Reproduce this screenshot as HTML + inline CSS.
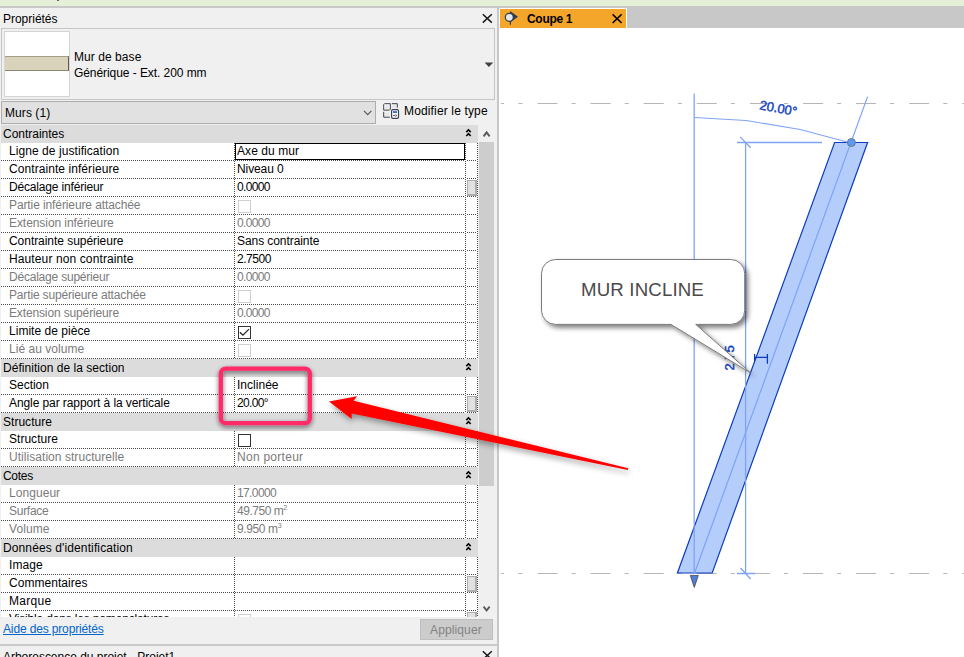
<!DOCTYPE html><html><head><meta charset="utf-8"><title>Revit</title><style>

html,body{margin:0;padding:0;}
html{overflow:hidden;background:#fff;}
body{width:964px;height:657px;overflow:hidden;background:#f0f0f0;font-family:"Liberation Sans",sans-serif;font-size:12px;color:#000;position:relative;}
.a{position:absolute;}
.t{position:absolute;white-space:nowrap;line-height:14px;height:14px;}
.hd{position:absolute;left:1px;width:477px;height:18px;background:#dcdcdc;}
.row{position:absolute;left:1px;width:477px;height:17px;background:#fff;}
.dl{position:absolute;left:1px;width:477px;height:1px;background:repeating-linear-gradient(90deg,#4a4a4a 0 1px,#fff 1px 2px);}
.vl{position:absolute;width:1px;background:repeating-linear-gradient(180deg,#4a4a4a 0 1px,#fff 1px 2px);}
.g{color:#7b7b7b;}
.cb{position:absolute;left:238px;width:11px;height:11px;border:1px solid #cfcfcf;background:#fff;}
.cb.en{border-color:#333;}
.sb{position:absolute;left:467px;width:10px;height:16px;background:#e1e1e1;border:1px solid #adadad;border-right-width:2px;border-bottom-width:2px;box-sizing:border-box;}

</style></head><body>
<div class="a" style="left:0;top:0;width:964px;height:6px;background:#e6efd8"></div>
<div class="a" style="left:0;top:6px;width:964px;height:2px;background:#c8c8c8"></div>
<div class="a" style="left:57px;top:0;width:2px;height:1px;background:#6a5a7a"></div>
<div class="a" style="left:497px;top:8px;width:2px;height:649px;background:#c8c8c8"></div>
<div class="a" style="left:499px;top:8px;width:465px;height:20px;background:#c8c8c8"></div>
<div class="a" style="left:499px;top:28px;width:465px;height:629px;background:#fff"></div>
<div class="a" style="left:499px;top:8px;width:128px;height:20px;background:#fff"></div>
<div class="a" style="left:500px;top:9px;width:126px;height:19px;background:#f4a62a"></div>
<div class="t" style="left:527px;top:12px;font-weight:bold;letter-spacing:-0.300px;">Coupe 1</div>
<svg class="a" style="left:499px;top:8px" width="130" height="20" viewBox="499 8 130 20"><path d="M612.6 14.4 L621.6 23 M621.6 14.4 L612.6 23" stroke="#000" stroke-width="1.5" fill="none"/><path d="M510.2 11 L518 16.7 L510.2 22.4 Z" fill="#2f3b4f"/><path d="M510.4 20 L510.4 24.8" stroke="#2f3b4f" stroke-width="1.2"/><circle cx="509.3" cy="17.3" r="4" fill="#e4e7ec" stroke="#2f3b4f" stroke-width="1.2"/></svg>
<div class="t" style="left:3px;top:12px;letter-spacing:-0.022px;">Propriétés</div>
<svg class="a" style="left:480px;top:11px" width="16" height="16" viewBox="480 11 16 16"><path d="M482.8 14.2 L491.8 22.6 M491.8 14.2 L482.8 22.6" stroke="#1a1a1a" stroke-width="1.5" fill="none"/></svg>
<div class="a" style="left:1px;top:28px;width:493px;height:70px;border:1px solid #c6c6c6;box-sizing:content-box;width:492px;height:70px"></div>
<div class="a" style="left:4px;top:31px;width:64px;height:64px;background:#fff;border:1px solid #d4d4d4;box-sizing:border-box;width:66px;height:66px"></div>
<div class="a" style="left:5px;top:56px;width:64px;height:15px;background:#d8d3ba;border-top:1px solid #a29e88;border-bottom:1px solid #8c8872;border-right:1px solid #5d5a4c;box-sizing:border-box"></div>
<div class="t" style="left:74px;top:50px;letter-spacing:0.060px;">Mur de base</div>
<div class="t" style="left:74px;top:66px;letter-spacing:-0.068px;">Générique - Ext. 200 mm</div>
<svg class="a" style="left:482px;top:60px" width="14" height="10" viewBox="482 60 14 10"><path d="M484.6 62.4 L493.2 62.4 L488.9 67 Z" fill="#404040"/></svg>
<div class="a" style="left:1px;top:101px;width:375px;height:23px;background:#e1e1e1;border:1px solid #adadad;box-sizing:border-box"></div>
<div class="t" style="left:5px;top:106px;letter-spacing:0.071px;">Murs (1)</div>
<svg class="a" style="left:360px;top:106px" width="16" height="12" viewBox="360 106 16 12"><path d="M364 110.8 L367.7 114.6 L371.4 110.8" stroke="#555" stroke-width="1.1" fill="none"/></svg>
<svg class="a" style="left:381px;top:102px" width="20" height="18" viewBox="381 102 20 18">
<g fill="none" stroke="#3a3f4a" stroke-width="1">
<path d="M384.6 103.7 H390.3 V109.2 L389.4 110.1 H383.7 V104.6 Z" fill="#fbfbfc"/>
<rect x="385.4" y="105.4" width="3.2" height="3.4" fill="#e2e5ea" stroke="none"/>
<path d="M391.8 103.7 H397.3 V107.7"/>
<path d="M383.7 111.8 V117.2 H389.8"/>
</g>
<rect x="385.5" y="112.6" width="3.4" height="3.6" fill="#e4e7ec"/>
<rect x="392.2" y="105.2" width="3.6" height="2.6" fill="#e4e7ec"/>
<rect x="391.6" y="109.7" width="6.9" height="8.6" rx="1.3" fill="#fff" stroke="#3a3f4a" stroke-width="1.2"/>
<rect x="393" y="111.2" width="4" height="1.7" fill="#1f5fc0"/>
<path d="M393 115.5 H397" stroke="#3a3f4a" stroke-width="0.9"/>
<circle cx="395.6" cy="115.5" r="0.9" fill="#fff" stroke="#3a3f4a" stroke-width="0.6"/>
</svg>
<div class="t" style="left:404px;top:104px;letter-spacing:0.147px;">Modifier le type</div>
<div class="a" style="left:1px;top:125px;width:477px;height:492px;background:#fff"></div>
<div class="hd" style="top:125px"></div>
<div class="t" style="left:3px;top:127px;letter-spacing:-0.010px;">Contraintes</div>
<svg class="a" style="left:464px;top:128px" width="10" height="12" viewBox="0 0 10 12"><path d="M2.3 4.1 L4.5 1.8 L6.7 4.1 M2.3 8 L4.5 5.7 L6.7 8" stroke="#000" stroke-width="1.6" fill="none"/></svg>
<div class="t" style="left:9px;top:144px;letter-spacing:0.067px;">Ligne de justification</div>
<div class="t" style="left:237px;top:144px;letter-spacing:0.067px;">Axe du mur</div>
<div class="dl" style="top:160px"></div>
<div class="a" style="left:235px;top:143px;width:230px;height:17px;border:1px solid #000;box-sizing:border-box"></div>
<div class="t" style="left:9px;top:162px;letter-spacing:0.070px;">Contrainte inférieure</div>
<div class="t" style="left:237px;top:162px;letter-spacing:-0.100px;">Niveau 0</div>
<div class="dl" style="top:178px"></div>
<div class="t" style="left:9px;top:180px;letter-spacing:-0.171px;">Décalage inférieur</div>
<div class="t" style="left:237px;top:180px;letter-spacing:-0.680px;">0.0000</div>
<div class="dl" style="top:196px"></div>
<div class="sb" style="top:180px"></div>
<div class="t g" style="left:9px;top:198px;letter-spacing:-0.104px;">Partie inférieure attachée</div>
<div class="cb" style="top:200px"></div>
<div class="dl" style="top:214px"></div>
<div class="t g" style="left:9px;top:216px;letter-spacing:-0.068px;">Extension inférieure</div>
<div class="t g" style="left:237px;top:216px;letter-spacing:-0.680px;">0.0000</div>
<div class="dl" style="top:232px"></div>
<div class="t" style="left:9px;top:234px;letter-spacing:-0.045px;">Contrainte supérieure</div>
<div class="t" style="left:237px;top:234px;letter-spacing:-0.071px;">Sans contrainte</div>
<div class="dl" style="top:250px"></div>
<div class="t" style="left:9px;top:252px;letter-spacing:0.114px;">Hauteur non contrainte</div>
<div class="t" style="left:237px;top:252px;letter-spacing:-0.460px;">2.7500</div>
<div class="dl" style="top:268px"></div>
<div class="t g" style="left:9px;top:270px;letter-spacing:-0.212px;">Décalage supérieur</div>
<div class="t g" style="left:237px;top:270px;letter-spacing:-0.680px;">0.0000</div>
<div class="dl" style="top:286px"></div>
<div class="t g" style="left:9px;top:288px;letter-spacing:-0.156px;">Partie supérieure attachée</div>
<div class="cb" style="top:290px"></div>
<div class="dl" style="top:304px"></div>
<div class="t g" style="left:9px;top:306px;letter-spacing:-0.137px;">Extension supérieure</div>
<div class="t g" style="left:237px;top:306px;letter-spacing:-0.680px;">0.0000</div>
<div class="dl" style="top:322px"></div>
<div class="t" style="left:9px;top:324px;letter-spacing:0.029px;">Limite de pièce</div>
<div class="cb en" style="top:326px"></div>
<svg class="a" style="left:238px;top:326px" width="13" height="13" viewBox="0 0 13 13"><path d="M1.9 6.2 L4.9 9.2 L11 3.1" stroke="#222" stroke-width="1.3" fill="none"/></svg>
<div class="dl" style="top:340px"></div>
<div class="t g" style="left:9px;top:342px;letter-spacing:0.033px;">Lié au volume</div>
<div class="cb" style="top:344px"></div>
<div class="dl" style="top:358px"></div>
<div class="hd" style="top:359px"></div>
<div class="t" style="left:3px;top:361px;letter-spacing:0.035px;">Définition de la section</div>
<svg class="a" style="left:464px;top:362px" width="10" height="12" viewBox="0 0 10 12"><path d="M2.3 4.1 L4.5 1.8 L6.7 4.1 M2.3 8 L4.5 5.7 L6.7 8" stroke="#000" stroke-width="1.6" fill="none"/></svg>
<div class="t" style="left:9px;top:378px;letter-spacing:-0.017px;">Section</div>
<div class="t" style="left:237px;top:378px;letter-spacing:0.020px;">Inclinée</div>
<div class="dl" style="top:394px"></div>
<div class="t" style="left:9px;top:396px;letter-spacing:-0.084px;">Angle par rapport à la verticale</div>
<div class="t" style="left:237px;top:396px;letter-spacing:-0.660px;">20.00°</div>
<div class="dl" style="top:412px"></div>
<div class="sb" style="top:396px"></div>
<div class="hd" style="top:413px"></div>
<div class="t" style="left:3px;top:415px;letter-spacing:0.025px;">Structure</div>
<svg class="a" style="left:464px;top:416px" width="10" height="12" viewBox="0 0 10 12"><path d="M2.3 4.1 L4.5 1.8 L6.7 4.1 M2.3 8 L4.5 5.7 L6.7 8" stroke="#000" stroke-width="1.6" fill="none"/></svg>
<div class="t" style="left:9px;top:432px;letter-spacing:0.025px;">Structure</div>
<div class="cb en" style="top:434px"></div>
<div class="dl" style="top:448px"></div>
<div class="t g" style="left:9px;top:450px;letter-spacing:0.048px;">Utilisation structurelle</div>
<div class="t g" style="left:237px;top:450px;letter-spacing:0.270px;">Non porteur</div>
<div class="dl" style="top:466px"></div>
<div class="hd" style="top:467px"></div>
<div class="t" style="left:3px;top:469px;letter-spacing:-0.300px;">Cotes</div>
<svg class="a" style="left:464px;top:470px" width="10" height="12" viewBox="0 0 10 12"><path d="M2.3 4.1 L4.5 1.8 L6.7 4.1 M2.3 8 L4.5 5.7 L6.7 8" stroke="#000" stroke-width="1.6" fill="none"/></svg>
<div class="t g" style="left:9px;top:486px;letter-spacing:0.057px;">Longueur</div>
<div class="t g" style="left:237px;top:486px;letter-spacing:-0.617px;">17.0000</div>
<div class="dl" style="top:502px"></div>
<div class="t g" style="left:9px;top:504px;letter-spacing:-0.267px;">Surface</div>
<div class="t g" style="left:237px;top:504px;letter-spacing:-0.471px;">49.750 m<span style="font-size:7px;position:relative;top:-5px;letter-spacing:0">2</span></div>
<div class="dl" style="top:520px"></div>
<div class="t g" style="left:9px;top:522px;letter-spacing:0.080px;">Volume</div>
<div class="t g" style="left:237px;top:522px;letter-spacing:-0.383px;">9.950 m<span style="font-size:7px;position:relative;top:-5px;letter-spacing:0">3</span></div>
<div class="dl" style="top:538px"></div>
<div class="hd" style="top:539px"></div>
<div class="t" style="left:3px;top:541px;letter-spacing:0.117px;">Données d'identification</div>
<svg class="a" style="left:464px;top:542px" width="10" height="12" viewBox="0 0 10 12"><path d="M2.3 4.1 L4.5 1.8 L6.7 4.1 M2.3 8 L4.5 5.7 L6.7 8" stroke="#000" stroke-width="1.6" fill="none"/></svg>
<div class="t" style="left:9px;top:558px;letter-spacing:0.100px;">Image</div>
<div class="dl" style="top:574px"></div>
<div class="t" style="left:9px;top:576px;letter-spacing:0.036px;">Commentaires</div>
<div class="dl" style="top:592px"></div>
<div class="sb" style="top:576px"></div>
<div class="t" style="left:9px;top:594px;letter-spacing:0.280px;">Marque</div>
<div class="dl" style="top:610px"></div>
<div class="t" style="left:9px;top:612px;letter-spacing:-0.159px;">Visible dans les nomenclatures</div>
<div class="cb" style="top:614px"></div>
<div class="dl" style="top:628px"></div>
<div class="sb" style="top:612px"></div>
<div class="vl" style="left:234px;top:143px;height:216px"></div>
<div class="vl" style="left:465px;top:143px;height:216px"></div>
<div class="vl" style="left:477px;top:143px;height:216px"></div>
<div class="vl" style="left:234px;top:377px;height:36px"></div>
<div class="vl" style="left:465px;top:377px;height:36px"></div>
<div class="vl" style="left:477px;top:377px;height:36px"></div>
<div class="vl" style="left:234px;top:431px;height:36px"></div>
<div class="vl" style="left:465px;top:431px;height:36px"></div>
<div class="vl" style="left:477px;top:431px;height:36px"></div>
<div class="vl" style="left:234px;top:485px;height:54px"></div>
<div class="vl" style="left:465px;top:485px;height:54px"></div>
<div class="vl" style="left:477px;top:485px;height:54px"></div>
<div class="vl" style="left:234px;top:557px;height:72px"></div>
<div class="vl" style="left:465px;top:557px;height:72px"></div>
<div class="vl" style="left:477px;top:557px;height:72px"></div>
<div class="a" style="left:0;top:617px;width:497px;height:40px;background:#f0f0f0"></div>
<div class="a" style="left:478px;top:125px;width:19px;height:492px;background:#f0f0f0"></div>
<div class="a" style="left:479px;top:142px;width:15px;height:344px;background:#cdcdcd"></div>
<svg class="a" style="left:480px;top:127px" width="14" height="12" viewBox="480 127 14 12"><path d="M483.6 136.3 L486.6 132.4 L489.6 136.3" stroke="#5a5a5a" stroke-width="1.9" fill="none"/></svg>
<svg class="a" style="left:480px;top:603px" width="14" height="12" viewBox="480 603 14 12"><path d="M483.6 606.6 L486.6 610.5 L489.6 606.6" stroke="#5a5a5a" stroke-width="1.9" fill="none"/></svg>
<div class="t" style="left:3px;top:622px;color:#0066cc;text-decoration:underline;letter-spacing:-0.144px;">Aide des propriétés</div>
<div class="a" style="left:420px;top:619px;width:73px;height:21px;background:#cccccc;border:1px solid #bfbfbf;box-sizing:border-box"></div>
<div class="t" style="left:430px;top:623px;color:#838383;letter-spacing:0.125px;">Appliquer</div>
<div class="a" style="left:0;top:644px;width:497px;height:2px;background:#c8c8c8"></div>
<div class="t" style="left:3px;top:650px;height:7px;overflow:hidden;letter-spacing:-0.019px;">Arborescence du projet - Projet1</div>
<svg class="a" style="left:480px;top:648px" width="16" height="9" viewBox="480 648 16 9"><path d="M482.8 651.2 L491.8 659.6 M491.8 651.2 L482.8 659.6" stroke="#1a1a1a" stroke-width="1.5" fill="none"/></svg>
<svg class="a" style="left:499px;top:28px" width="465" height="629" viewBox="499 28 465 629">
<defs>
<filter id="sh" x="-10%" y="-10%" width="125%" height="140%"><feGaussianBlur in="SourceAlpha" stdDeviation="2.4"/><feOffset dx="2.5" dy="2.5" result="o"/><feComponentTransfer><feFuncA type="linear" slope="0.5"/></feComponentTransfer><feMerge><feMergeNode/><feMergeNode in="SourceGraphic"/></feMerge></filter>
</defs>
<g stroke="#b6b6b6" stroke-width="1" fill="none">
<path d="M501 103.5 H504 M501 573.5 H504"/>
<path d="M518.5 103.5 H964 M518.5 573.5 H964" stroke-dasharray="4 15 20 14.1"/>
</g>
<polygon points="834.6,142.5 867.6,142.5 712.2,573 677.4,573" fill="#b5cdfb" stroke="#0a3cc0" stroke-width="1.2" stroke-linejoin="miter"/>
<g stroke="#7fa3f7" stroke-width="1.3" fill="none">
<path d="M694.2 93.4 V574"/>
<path d="M694.2 117.6 L746 120.4 L800.2 129.6 L851 143" stroke-width="1.05"/>
<path d="M737 142.5 H822"/>
<path d="M745.6 142.5 V573.5"/>
<path d="M740.1 136.9 L750.7 147.8"/>
<path d="M737 573.5 H755 M740.5 568 L750.6 579"/>
</g>
<path d="M867.6 96.6 L694.6 573" stroke="#7fa3f7" stroke-width="1.2" fill="none"/>
<circle cx="851.4" cy="142.5" r="4" fill="#5b9bf4" stroke="#6c7686" stroke-width="1"/>
<path d="M690.3 575.4 H698.3 L694.3 587.4 Z" fill="#4f7fd8" stroke="#444" stroke-width="0.8"/>
<g stroke="#0a3cc0" stroke-width="1.3" fill="none"><path d="M754.6 357.3 H767.4 M754.6 354 V361.2 M767.4 354 V363.8"/></g>
<text x="0" y="0" transform="translate(759 109.2) rotate(10.6)" font-family='"Liberation Sans", sans-serif' font-size="13" fill="#1040c2" stroke="#1040c2" stroke-width="0.4">20.00°</text>
<text x="0" y="0" transform="translate(734 370.5) rotate(-90)" font-family='"Liberation Sans", sans-serif' font-size="13" fill="#1040c2" stroke="#1040c2" stroke-width="0.4">2.75</text>
<g filter="url(#sh)">
<path d="M555.5 259.5 H730.7 A14 14 0 0 1 744.7 273.5 V310.4 A14 14 0 0 1 730.7 324.4 H695.7 L750.4 372.8 L671 324.4 H555.5 A14 14 0 0 1 541.5 310.4 V273.5 A14 14 0 0 1 555.5 259.5 Z" fill="#fff" stroke="#7a7a7a" stroke-width="1"/>
</g>
<text x="642.5" y="296.4" text-anchor="middle" font-family='"Liberation Sans", sans-serif' font-size="18.67" letter-spacing="0.15" fill="#4a4a4a">MUR INCLINE</text>
</svg>
<svg class="a" style="left:0;top:0" width="964" height="657" viewBox="0 0 964 657">
<defs>
<filter id="ps" x="-15%" y="-20%" width="130%" height="140%"><feGaussianBlur in="SourceAlpha" stdDeviation="2.8"/><feOffset dx="0" dy="2" result="o"/><feComponentTransfer><feFuncA type="linear" slope="0.58"/></feComponentTransfer><feMerge><feMergeNode/><feMergeNode in="SourceGraphic"/></feMerge></filter>
<filter id="as" x="-10%" y="-30%" width="120%" height="170%"><feGaussianBlur in="SourceAlpha" stdDeviation="3"/><feOffset dx="1" dy="3" result="o"/><feComponentTransfer><feFuncA type="linear" slope="0.4"/></feComponentTransfer><feMerge><feMergeNode/><feMergeNode in="SourceGraphic"/></feMerge></filter>
</defs>
<rect x="220.8" y="368.6" width="89" height="54.6" rx="5" ry="5" fill="none" stroke="#ff2b68" stroke-width="4.3" filter="url(#ps)"/>
<path d="M329 401.4 L357.1 396.2 L353.6 400.8 L628.2 468.3 L627.8 470 L351.7 413.6 L351.7 418.9 Z" fill="#ff0000" filter="url(#as)"/>
</svg>
</body></html>
